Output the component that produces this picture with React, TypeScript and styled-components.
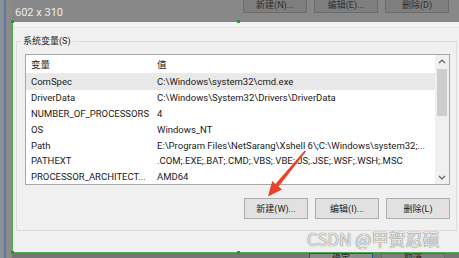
import React from "react";
import styled, { createGlobalStyle } from "styled-components";

const GlobalStyle = createGlobalStyle`
  html, body {
    margin: 0;
    padding: 0;
  }
  body {
    width: 459px;
    height: 258px;
    overflow: hidden;
    background: #878787;
    font-family: Roboto, "Noto Sans CJK SC", sans-serif;
  }
`;

// 系统变量 list
const rows = [
  { name: "ComSpec", value: "C:\\Windows\\system32\\cmd.exe", selected: true },
  { name: "DriverData", value: "C:\\Windows\\System32\\Drivers\\DriverData" },
  { name: "NUMBER_OF_PROCESSORS", value: "4" },
  { name: "OS", value: "Windows_NT" },
  {
    name: "Path",
    value: "E:\\Program Files\\NetSarang\\Xshell 6\\;C:\\Windows\\system32;...",
  },
  {
    name: "PATHEXT",
    value: ".COM;.EXE;.BAT;.CMD;.VBS;.VBE;.JS;.JSE;.WSF;.WSH;.MSC",
  },
  { name: "PROCESSOR_ARCHITECT...", value: "AMD64" },
];

const handles = [
  { x: 11, y: 20 },
  { x: 237, y: 20 },
  { x: 11, y: 251 },
  { x: 237, y: 251 },
];

export default function App() {
  return (
    <Screen>
      <GlobalStyle />
      <LeftStrip />
      <Main>
        <TopBar>
          <SizeLabel>602 x 310</SizeLabel>
          <DimButtons>
            <DimButton>新建(N)...</DimButton>
            <DimButton>编辑(E)...</DimButton>
            <DimButton>删除(D)</DimButton>
          </DimButtons>
        </TopBar>

        <Dialog>
          <TopEdge />
          <GroupBox>
            <Legend>系统变量(S)</Legend>
            <GroupBody>
              <ListBox>
                <Table>
                  <HeaderRow>
                    <Cell>变量</Cell>
                    <Cell>值</Cell>
                  </HeaderRow>
                  {rows.map((r) => (
                    <Row key={r.name} $selected={!!r.selected}>
                      <Cell>{r.name}</Cell>
                      <Cell>{r.value}</Cell>
                    </Row>
                  ))}
                </Table>
                <Scrollbar>
                  <Arrow>
                    <svg width="8" height="5" viewBox="0 0 8 5">
                      <path d="M1 4 L4 1 L7 4" fill="none" stroke="#606060" strokeWidth="1.2" />
                    </svg>
                  </Arrow>
                  <Thumb />
                  <Track />
                  <Arrow>
                    <svg width="8" height="5" viewBox="0 0 8 5">
                      <path d="M1 1 L4 4 L7 1" fill="none" stroke="#606060" strokeWidth="1.2" />
                    </svg>
                  </Arrow>
                </Scrollbar>
              </ListBox>
              <ButtonRow>
                <Button>新建(W)...</Button>
                <Button>编辑(I)...</Button>
                <Button>删除(L)</Button>
              </ButtonRow>
            </GroupBody>
          </GroupBox>
        </Dialog>

        <BottomBar>
          <BottomButton $primary>确定</BottomButton>
          <BottomButton>取消</BottomButton>
        </BottomBar>
      </Main>

      {handles.map((h, i) => (
        <Handle key={i} style={{ left: h.x, top: h.y }} />
      ))}

      <RedArrow width="459" height="258" viewBox="0 0 459 258">
        <polygon
          points="306,151.6 278.6,186.6 282,189.6 268,196.5 272.2,181 275.4,183.9 304.6,150.6"
          fill="#e8432b"
        />
      </RedArrow>

      <Watermark>CSDN @甲贺忍硕</Watermark>
    </Screen>
  );
}

const Screen = styled.div`
  position: relative;
  width: 459px;
  height: 258px;
  display: flex;
  overflow: hidden;
`;

const LeftStrip = styled.div`
  width: 12px;
  flex: none;
  background: linear-gradient(
    to right,
    #8a9099 0 4px,
    #5d7b98 4px 6px,
    #8b8b8b 6px
  );
`;

const Main = styled.div`
  flex: 1;
  min-width: 0;
  display: flex;
  flex-direction: column;
`;

const TopBar = styled.div`
  height: 21px;
  flex: none;
  display: flex;
  justify-content: space-between;
  padding: 0 10px 0 3px;
  background: #888888;
`;

const SizeLabel = styled.div`
  padding-top: 7px;
  font-size: 11px;
  line-height: 12px;
  color: #ececec;
`;

const DimButtons = styled.div`
  display: flex;
  gap: 7px;
  align-items: flex-start;
`;

const DimButton = styled.div`
  width: 64px;
  height: 13px;
  box-sizing: border-box;
  border: 1px solid #6c6c6c;
  border-top: none;
  background: #7e7e7e;
  color: #2e2e2e;
  font-size: 9px;
  line-height: 11px;
  text-align: center;
`;

const Dialog = styled.div`
  height: 232px;
  flex: none;
  box-sizing: border-box;
  border-top: 1px solid #4caa4c;
  border-left: 1px solid #4caa4c;
  border-bottom: 1px solid #4caa4c;
  background: #f0f0f0;
  display: flex;
  flex-direction: column;
`;

const TopEdge = styled.div`
  height: 5px;
  background: #f4f4f4;
  border-bottom: 1px solid #e4e4e4;
`;

const GroupBox = styled.fieldset`
  margin: 7px 2px 0 3px;
  padding: 7px 7px 11px 8px;
  border: 1px solid #dcdcdc;
  min-width: 0;
`;

const Legend = styled.legend`
  margin-left: -4px;
  padding: 0 2px;
  font-size: 9px;
  line-height: 12px;
  color: #1c1c1c;
`;

const GroupBody = styled.div`
  width: 425px;
  display: flex;
  flex-direction: column;
`;

const ListBox = styled.div`
  height: 131px;
  box-sizing: border-box;
  border: 1px solid #a8a8a8;
  background: #ffffff;
  display: flex;
`;

const Table = styled.div`
  flex: 1;
  min-width: 0;
`;

const HeaderRow = styled.div`
  height: 19px;
  display: grid;
  grid-template-columns: 126px 1fr;
  align-items: center;
  border-bottom: 1px solid #ececec;
  box-sizing: border-box;
`;

const Row = styled.div<{ $selected: boolean }>`
  height: 15.8px;
  display: grid;
  grid-template-columns: 126px 1fr;
  align-items: center;
  background: ${(p) => (p.$selected ? "#e9e9e9" : "transparent")};
`;

const Cell = styled.div`
  padding-left: 5px;
  font-size: 9.5px;
  color: #1a1a1a;
  white-space: nowrap;
  overflow: hidden;
`;

const Scrollbar = styled.div`
  width: 14px;
  flex: none;
  background: #f0f0f0;
  display: flex;
  flex-direction: column;
`;

const Arrow = styled.div`
  height: 13px;
  display: flex;
  align-items: center;
  justify-content: center;
`;

const Thumb = styled.div`
  height: 47px;
  margin: 1px 2px 0;
  background: #cdcdcd;
`;

const Track = styled.div`
  flex: 1;
`;

const ButtonRow = styled.div`
  margin-top: 13px;
  display: flex;
  justify-content: flex-end;
  gap: 7px;
`;

const Button = styled.div`
  width: 64px;
  height: 21px;
  box-sizing: border-box;
  border: 1px solid #adadad;
  background: #e1e1e1;
  color: #1c1c1c;
  font-size: 9px;
  display: flex;
  align-items: center;
  justify-content: center;
`;

const BottomBar = styled.div`
  flex: 1;
  background: #767676;
  display: flex;
  justify-content: flex-end;
  gap: 8px;
  padding-right: 14px;
`;

const BottomButton = styled.div<{ $primary?: boolean }>`
  width: 64px;
  height: 10px;
  box-sizing: border-box;
  border: 1px solid ${(p) => (p.$primary ? "#1d5c8c" : "#6a6a6a")};
  background: ${(p) => (p.$primary ? "#8c8c8c" : "#7e7e7e")};
  color: #2a2a2a;
  font-size: 9px;
  line-height: 9px;
  text-align: center;
`;

const Handle = styled.div`
  position: absolute;
  width: 3px;
  height: 3px;
  background: #1e9e2a;
`;

const RedArrow = styled.svg`
  position: absolute;
  left: 0;
  top: 0;
  pointer-events: none;
`;

const Watermark = styled.div`
  position: absolute;
  left: 307px;
  top: 229px;
  font-family: "Noto Sans CJK SC", sans-serif;
  font-size: 17px;
  line-height: 20px;
  color: rgba(240, 240, 240, 0.95);
  text-shadow: 0 0 1px rgba(70, 70, 70, 0.75), 0 0 1px rgba(70, 70, 70, 0.5);
  white-space: nowrap;
  pointer-events: none;
`;
